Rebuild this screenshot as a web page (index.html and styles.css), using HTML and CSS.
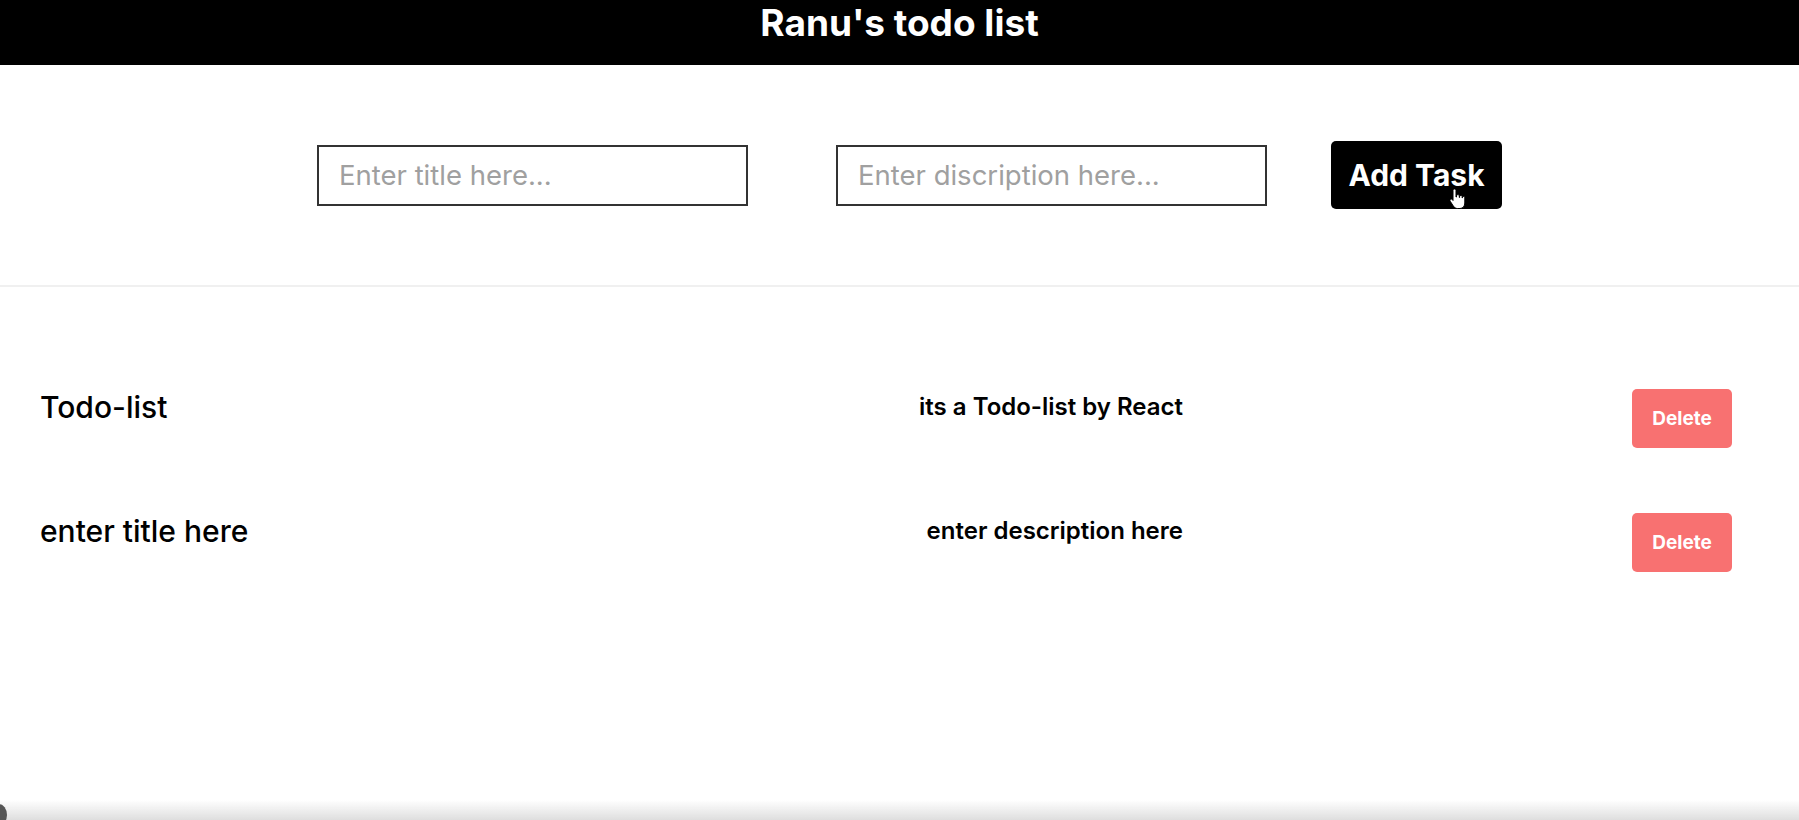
FILE: index.html
```html
<!DOCTYPE html>
<html lang="en">
<head>
<meta charset="utf-8">
<title>Ranu's todo list</title>
<link rel="stylesheet" href="styles.css">
</head>
<body>
<header class="topbar">
  <h1 class="title">Ranu's todo list</h1>
</header>
<section class="form">
  <input class="field" type="text" placeholder="Enter title here...">
  <input class="field field-desc" type="text" placeholder="Enter discription here...">
  <button class="add-btn">Add Task
    <svg class="cursor" width="16" height="22" viewBox="0 0 16 22"><path d="M5.5 1C6.3 1 7 1.7 7 2.5V9H7.5V7.8C7.5 7 8.2 6.5 8.9 6.5C9.6 6.5 10.3 7 10.3 7.8V9.5H10.6V8.6C10.6 7.9 11.2 7.4 11.9 7.4C12.6 7.4 13.2 7.9 13.2 8.6V10H13.4V9.6C13.4 9 14 8.5 14.6 8.5C15.3 8.5 15.8 9 15.8 9.6V15C15.8 18 14 20.5 11 20.5H8.5C6.5 20.5 5.3 19.5 4.3 18L1.2 13.2C0.8 12.5 1 11.7 1.7 11.3C2.4 10.9 3.2 11.1 3.6 11.8L4 12.5V2.5C4 1.7 4.7 1 5.5 1Z" fill="#fff" stroke="#000" stroke-width="1"/></svg>
  </button>
</section>
<main class="list">
  <div class="row">
    <h3 class="row-title">Todo-list</h3>
    <p class="row-desc">its a Todo-list by React</p>
    <button class="del-btn">Delete</button>
  </div>
  <div class="row">
    <h3 class="row-title">enter title here</h3>
    <p class="row-desc">enter description here</p>
    <button class="del-btn">Delete</button>
  </div>
</main>
<div class="player-shade"></div>
<div class="player-dot"></div>
</body>
</html>
```
FILE: styles.css
```css
* { box-sizing: border-box; }
html, body {
  margin: 0;
  padding: 0;
  background: #fff;
  font-family: Inter, "Liberation Sans", sans-serif;
  color: #000;
}
.topbar {
  background: #000;
  height: 65px;
  display: flex;
  justify-content: center;
  align-items: flex-start;
  padding-top: 0;
}
.title {
  margin: 0;
  color: #fff;
  font-size: 37px;
  line-height: 45px;
  font-weight: 700;
}
.form {
  height: 222px;
  display: flex;
  justify-content: center;
  align-items: center;
  padding-left: 20px;
  border-bottom: 2px solid #f0f0f0;
}
.field {
  width: 431px;
  height: 61px;
  border: 2px solid #333;
  padding: 0 20px;
  font-family: Inter, "Liberation Sans", sans-serif;
  font-size: 27.5px;
  color: #000;
  outline: none;
  background: #fff;
}
.field::placeholder { color: #a0a0a0; }
.field-desc { margin-left: 88px; }
.add-btn {
  position: relative;
  margin-left: 64px;
  width: 171px;
  height: 68px;
  border: none;
  border-radius: 5px;
  background: #000;
  color: #fff;
  font-family: Inter, "Liberation Sans", sans-serif;
  font-size: 30px;
  font-weight: 700;
  padding: 0;
}
.cursor {
  position: absolute;
  left: 118px;
  top: 47px;
}
.list {
  padding: 102px 67px 0 40px;
  display: flex;
  flex-direction: column;
  gap: 65px;
}
.row {
  display: grid;
  grid-template-columns: 1fr auto 549px;
  align-items: start;
  height: 59px;
}
.row-title {
  margin: 3px 0 0;
  font-size: 30px;
  line-height: 30px;
  font-weight: 500;
}
.row-desc {
  margin: 6px 0 0;
  font-size: 24px;
  line-height: 24px;
  font-weight: 600;
  text-align: right;
}
.del-btn {
  justify-self: end;
  width: 100px;
  height: 59px;
  border: none;
  border-radius: 5px;
  background: #f87171;
  color: #fff;
  font-family: Inter, "Liberation Sans", sans-serif;
  font-size: 19px;
  font-weight: 700;
  padding: 0;
}
.player-shade {
  position: fixed;
  left: 0;
  right: 0;
  bottom: 0;
  height: 20px;
  background: linear-gradient(to bottom, rgba(220,220,220,0), #dedede);
}
.player-dot {
  position: fixed;
  left: -9px;
  bottom: -6px;
  width: 16px;
  height: 22px;
  border-radius: 50%;
  background: #555;
}
```
